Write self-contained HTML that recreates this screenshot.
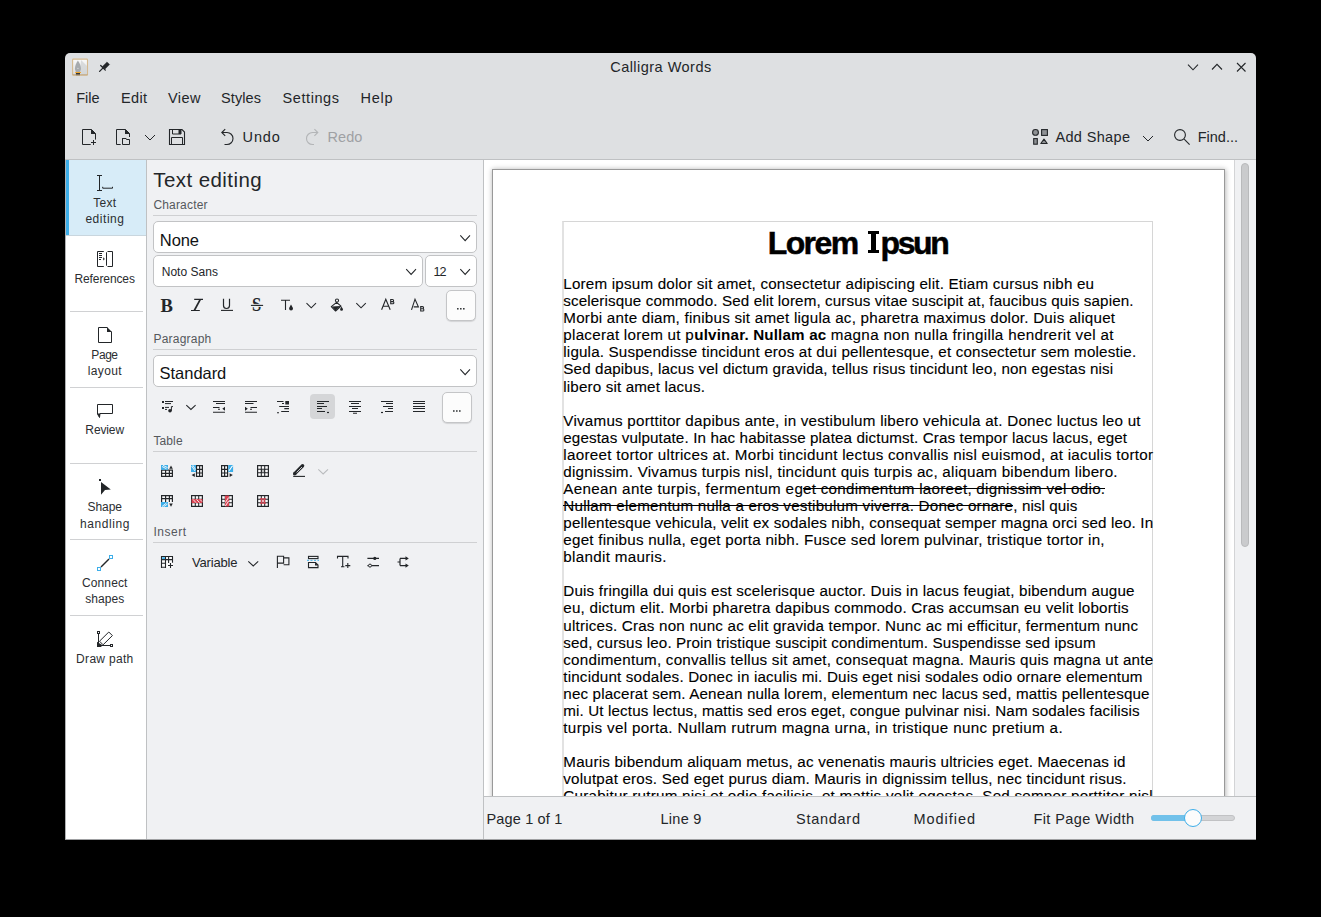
<!DOCTYPE html>
<html><head><meta charset="utf-8"><style>
html,body{margin:0;padding:0;}
body{width:1321px;height:917px;background:#000;position:relative;overflow:hidden;font-family:"Liberation Sans",sans-serif;color:#232629;}
.t{position:absolute;white-space:pre;}
svg{overflow:visible}
</style></head><body>
<div style="position:absolute;left:65px;top:53px;width:1191px;height:107px;background:#dee0e2;border-radius:5px 5px 0 0;"></div>
<div style="position:absolute;left:65px;top:159px;width:1191px;height:1px;background:#bfc1c3;"></div>
<div style="position:absolute;left:65px;top:160px;width:81px;height:680px;background:#ffffff;"></div>
<div style="position:absolute;left:146px;top:160px;width:1px;height:680px;background:#bfc1c3;"></div>
<div style="position:absolute;left:66px;top:160px;width:80px;height:75px;background:#d7ecf8;"></div>
<div style="position:absolute;left:66px;top:160px;width:3px;height:75px;background:#3daee9;"></div>
<div style="position:absolute;left:66px;top:235px;width:80px;height:1px;background:#c9d6de;"></div>
<div style="position:absolute;left:70px;top:311px;width:73px;height:1px;background:#d0d1d3;"></div>
<div style="position:absolute;left:70px;top:387px;width:73px;height:1px;background:#d0d1d3;"></div>
<div style="position:absolute;left:70px;top:463px;width:73px;height:1px;background:#d0d1d3;"></div>
<div style="position:absolute;left:70px;top:539px;width:73px;height:1px;background:#d0d1d3;"></div>
<div style="position:absolute;left:70px;top:615px;width:73px;height:1px;background:#d0d1d3;"></div>
<div style="position:absolute;left:147px;top:160px;width:336px;height:680px;background:#f0f1f3;"></div>
<div style="position:absolute;left:483px;top:160px;width:1px;height:680px;background:#bfc1c3;"></div>
<div style="position:absolute;left:484px;top:160px;width:750px;height:636px;background:#ffffff;"></div>
<div style="position:absolute;left:1234px;top:160px;width:1px;height:636px;background:#d3d4d6;"></div>
<div style="position:absolute;left:1235px;top:160px;width:21px;height:636px;background:#f0f1f3;"></div>
<div style="position:absolute;left:1241px;top:163px;width:8px;height:384px;background:#cacbcd;border:1px solid #b9babc;box-sizing:border-box;border-radius:4px;"></div>
<div style="position:absolute;left:484px;top:796px;width:772px;height:44px;background:#f0f1f3;"></div>
<div style="position:absolute;left:484px;top:796px;width:772px;height:1px;background:#bfc1c3;"></div>
<div style="position:absolute;left:65px;top:160px;width:1px;height:680px;background:#b0b1b3;"></div>
<div style="position:absolute;left:65px;top:839px;width:1191px;height:1px;background:#9fa0a2;"></div>
<div style="position:absolute;left:484px;top:160px;width:750px;height:636px;overflow:hidden;">
<div style="position:absolute;left:9px;top:10px;width:732px;height:700px;background:#fff;box-shadow:0 0 5px 1px rgba(0,0,0,0.28);"></div>
<div style="position:absolute;left:8px;top:9px;width:733px;height:700px;border-left:1px solid #999;border-top:1px solid #999;border-right:1px solid #999;box-sizing:border-box;"></div>
<div style="position:absolute;left:78px;top:61px;width:591px;height:600px;border:1px solid #d6d6d6;border-left:2px solid #e2e2e2;box-sizing:border-box;"></div>
<div class="t" style="left:283.70px;top:66.51px;font-size:32px;line-height:32px;letter-spacing:-1.599px;font-weight:700;color:#000000;-webkit-text-stroke:0.5px #000;">Lorem</div>
<div style="position:absolute;left:387.20000000000005px;top:71.19999999999999px;width:4.6px;height:22.2px;background:#000;"></div>
<div style="position:absolute;left:384.29999999999995px;top:71.19999999999999px;width:10.5px;height:3.0px;background:#000;"></div>
<div style="position:absolute;left:384.29999999999995px;top:90.4px;width:10.5px;height:3.0px;background:#000;"></div>
<div class="t" style="left:396.60px;top:66.51px;font-size:32px;line-height:32px;letter-spacing:-2.412px;font-weight:700;color:#000000;-webkit-text-stroke:0.5px #000;">psun</div>
<div class="t" style="left:79.30px;top:116.13px;font-size:15.2px;line-height:15.2px;letter-spacing:0.197px;color:#000000;-webkit-text-stroke:0.12px #000;">Lorem ipsum dolor sit amet, consectetur adipiscing elit. Etiam cursus nibh eu</div>
<div class="t" style="left:79.30px;top:133.20px;font-size:15.2px;line-height:15.2px;letter-spacing:0.117px;color:#000000;-webkit-text-stroke:0.12px #000;">scelerisque commodo. Sed elit lorem, cursus vitae suscipit at, faucibus quis sapien.</div>
<div class="t" style="left:79.30px;top:150.27px;font-size:15.2px;line-height:15.2px;letter-spacing:0.228px;color:#000000;-webkit-text-stroke:0.12px #000;">Morbi ante diam, finibus sit amet ligula ac, pharetra maximus dolor. Duis aliquet</div>
<div class="t" style="left:79.30px;top:167.34px;font-size:15.2px;line-height:15.2px;letter-spacing:0.257px;color:#000000;-webkit-text-stroke:0.12px #000;">placerat lorem ut p</div>
<div class="t" style="left:210.30px;top:167.34px;font-size:15.2px;line-height:15.2px;letter-spacing:0.162px;font-weight:700;color:#000000;">ulvinar. Nullam ac</div>
<div class="t" style="left:342.30px;top:167.34px;font-size:15.2px;line-height:15.2px;letter-spacing:0.325px;color:#000000;-webkit-text-stroke:0.12px #000;"> magna non nulla fringilla hendrerit vel at</div>
<div class="t" style="left:79.30px;top:184.41px;font-size:15.2px;line-height:15.2px;letter-spacing:0.169px;color:#000000;-webkit-text-stroke:0.12px #000;">ligula. Suspendisse tincidunt eros at dui pellentesque, et consectetur sem molestie.</div>
<div class="t" style="left:79.30px;top:201.48px;font-size:15.2px;line-height:15.2px;letter-spacing:0.138px;color:#000000;-webkit-text-stroke:0.12px #000;">Sed dapibus, lacus vel dictum gravida, tellus risus tincidunt leo, non egestas nisi</div>
<div class="t" style="left:79.30px;top:218.55px;font-size:15.2px;line-height:15.2px;letter-spacing:0.150px;color:#000000;-webkit-text-stroke:0.12px #000;">libero sit amet lacus.</div>
<div class="t" style="left:79.30px;top:252.69px;font-size:15.2px;line-height:15.2px;letter-spacing:0.232px;color:#000000;-webkit-text-stroke:0.12px #000;">Vivamus porttitor dapibus ante, in vestibulum libero vehicula at. Donec luctus leo ut</div>
<div class="t" style="left:79.30px;top:269.76px;font-size:15.2px;line-height:15.2px;letter-spacing:0.123px;color:#000000;-webkit-text-stroke:0.12px #000;">egestas vulputate. In hac habitasse platea dictumst. Cras tempor lacus lacus, eget</div>
<div class="t" style="left:79.30px;top:286.83px;font-size:15.2px;line-height:15.2px;letter-spacing:0.276px;color:#000000;-webkit-text-stroke:0.12px #000;">laoreet tortor ultrices at. Morbi tincidunt lectus convallis nisl euismod, at iaculis tortor</div>
<div class="t" style="left:79.30px;top:303.90px;font-size:15.2px;line-height:15.2px;letter-spacing:0.239px;color:#000000;-webkit-text-stroke:0.12px #000;">dignissim. Vivamus turpis nisl, tincidunt quis turpis ac, aliquam bibendum libero.</div>
<div class="t" style="left:79.30px;top:320.97px;font-size:15.2px;line-height:15.2px;letter-spacing:0.319px;color:#000000;-webkit-text-stroke:0.12px #000;">Aenean ante turpis, fermentum eg</div>
<div style="position:absolute;left:319px;top:328px;width:302.29999999999995px;height:1px;background:#000;"></div>
<div class="t" style="left:319.00px;top:320.97px;font-size:15.2px;line-height:15.2px;letter-spacing:0.258px;color:#000000;-webkit-text-stroke:0.12px #000;">et condimentum laoreet, dignissim vel odio.</div>
<div style="position:absolute;left:79.29999999999995px;top:345px;width:450.0px;height:1px;background:#000;"></div>
<div class="t" style="left:79.30px;top:338.04px;font-size:15.2px;line-height:15.2px;letter-spacing:0.217px;color:#000000;-webkit-text-stroke:0.12px #000;">Nullam elementum nulla a eros vestibulum viverra. Donec ornare</div>
<div class="t" style="left:529.30px;top:338.04px;font-size:15.2px;line-height:15.2px;letter-spacing:0.074px;color:#000000;-webkit-text-stroke:0.12px #000;">, nisl quis</div>
<div class="t" style="left:79.30px;top:355.11px;font-size:15.2px;line-height:15.2px;letter-spacing:0.137px;color:#000000;-webkit-text-stroke:0.12px #000;">pellentesque vehicula, velit ex sodales nibh, consequat semper magna orci sed leo. In</div>
<div class="t" style="left:79.30px;top:372.18px;font-size:15.2px;line-height:15.2px;letter-spacing:0.228px;color:#000000;-webkit-text-stroke:0.12px #000;">eget finibus nulla, eget porta nibh. Fusce sed lorem pulvinar, tristique tortor in,</div>
<div class="t" style="left:79.30px;top:389.25px;font-size:15.2px;line-height:15.2px;letter-spacing:0.311px;color:#000000;-webkit-text-stroke:0.12px #000;">blandit mauris.</div>
<div class="t" style="left:79.30px;top:423.39px;font-size:15.2px;line-height:15.2px;letter-spacing:0.177px;color:#000000;-webkit-text-stroke:0.12px #000;">Duis fringilla dui quis est scelerisque auctor. Duis in lacus feugiat, bibendum augue</div>
<div class="t" style="left:79.30px;top:440.46px;font-size:15.2px;line-height:15.2px;letter-spacing:0.210px;color:#000000;-webkit-text-stroke:0.12px #000;">eu, dictum elit. Morbi pharetra dapibus commodo. Cras accumsan eu velit lobortis</div>
<div class="t" style="left:79.30px;top:457.53px;font-size:15.2px;line-height:15.2px;letter-spacing:0.195px;color:#000000;-webkit-text-stroke:0.12px #000;">ultrices. Cras non nunc ac elit gravida tempor. Nunc ac mi efficitur, fermentum nunc</div>
<div class="t" style="left:79.30px;top:474.60px;font-size:15.2px;line-height:15.2px;letter-spacing:0.130px;color:#000000;-webkit-text-stroke:0.12px #000;">sed, cursus leo. Proin tristique suscipit condimentum. Suspendisse sed ipsum</div>
<div class="t" style="left:79.30px;top:491.67px;font-size:15.2px;line-height:15.2px;letter-spacing:0.226px;color:#000000;-webkit-text-stroke:0.12px #000;">condimentum, convallis tellus sit amet, consequat magna. Mauris quis magna ut ante</div>
<div class="t" style="left:79.30px;top:508.74px;font-size:15.2px;line-height:15.2px;letter-spacing:0.174px;color:#000000;-webkit-text-stroke:0.12px #000;">tincidunt sodales. Donec in iaculis mi. Duis eget nisi sodales odio ornare elementum</div>
<div class="t" style="left:79.30px;top:525.81px;font-size:15.2px;line-height:15.2px;letter-spacing:0.150px;color:#000000;-webkit-text-stroke:0.12px #000;">nec placerat sem. Aenean nulla lorem, elementum nec lacus sed, mattis pellentesque</div>
<div class="t" style="left:79.30px;top:542.88px;font-size:15.2px;line-height:15.2px;letter-spacing:0.124px;color:#000000;-webkit-text-stroke:0.12px #000;">mi. Ut lectus lectus, mattis sed eros eget, congue pulvinar nisi. Nam sodales facilisis</div>
<div class="t" style="left:79.30px;top:559.95px;font-size:15.2px;line-height:15.2px;letter-spacing:0.339px;color:#000000;-webkit-text-stroke:0.12px #000;">turpis vel porta. Nullam rutrum magna urna, in tristique nunc pretium a.</div>
<div class="t" style="left:79.30px;top:594.09px;font-size:15.2px;line-height:15.2px;letter-spacing:0.198px;color:#000000;-webkit-text-stroke:0.12px #000;">Mauris bibendum aliquam metus, ac venenatis mauris ultricies eget. Maecenas id</div>
<div class="t" style="left:79.30px;top:611.16px;font-size:15.2px;line-height:15.2px;letter-spacing:0.196px;color:#000000;-webkit-text-stroke:0.12px #000;">volutpat eros. Sed eget purus diam. Mauris in dignissim tellus, nec tincidunt risus.</div>
<div class="t" style="left:79.30px;top:628.23px;font-size:15.2px;line-height:15.2px;letter-spacing:0.235px;color:#000000;-webkit-text-stroke:0.12px #000;">Curabitur rutrum nisi et odio facilisis, et mattis velit egestas. Sed semper porttitor nisl</div>
</div>
<div class="t" style="left:610.20px;top:59.53px;font-size:14.5px;line-height:14.5px;letter-spacing:0.476px;">Calligra Words</div>
<div class="t" style="left:76.25px;top:90.73px;font-size:14.5px;line-height:14.5px;letter-spacing:-0.038px;">File</div>
<div class="t" style="left:121.00px;top:90.73px;font-size:14.5px;line-height:14.5px;letter-spacing:0.338px;">Edit</div>
<div class="t" style="left:168.00px;top:90.73px;font-size:14.5px;line-height:14.5px;letter-spacing:0.444px;">View</div>
<div class="t" style="left:221.00px;top:90.73px;font-size:14.5px;line-height:14.5px;letter-spacing:0.103px;">Styles</div>
<div class="t" style="left:282.50px;top:90.73px;font-size:14.5px;line-height:14.5px;letter-spacing:0.587px;">Settings</div>
<div class="t" style="left:360.50px;top:90.73px;font-size:14.5px;line-height:14.5px;letter-spacing:0.726px;">Help</div>
<div class="t" style="left:242.60px;top:130.23px;font-size:14.5px;line-height:14.5px;letter-spacing:0.812px;">Undo</div>
<div class="t" style="left:327.40px;top:130.23px;font-size:14.5px;line-height:14.5px;letter-spacing:0.112px;color:#9fa1a4;">Redo</div>
<div class="t" style="left:1055.40px;top:130.23px;font-size:14.5px;line-height:14.5px;letter-spacing:0.355px;">Add Shape</div>
<div class="t" style="left:1197.70px;top:130.23px;font-size:14.5px;line-height:14.5px;letter-spacing:0.001px;">Find...</div>
<div class="t" style="left:93.30px;top:196.64px;font-size:12px;line-height:12px;letter-spacing:0.264px;color:#2b2e31;">Text</div>
<div class="t" style="left:85.40px;top:213.34px;font-size:12px;line-height:12px;letter-spacing:0.540px;color:#2b2e31;">editing</div>
<div class="t" style="left:74.45px;top:272.64px;font-size:12px;line-height:12px;letter-spacing:-0.096px;color:#2b2e31;">References</div>
<div class="t" style="left:91.35px;top:348.54px;font-size:12px;line-height:12px;letter-spacing:-0.442px;color:#2b2e31;">Page</div>
<div class="t" style="left:87.80px;top:365.24px;font-size:12px;line-height:12px;letter-spacing:0.356px;color:#2b2e31;">layout</div>
<div class="t" style="left:85.35px;top:424.14px;font-size:12px;line-height:12px;letter-spacing:-0.129px;color:#2b2e31;">Review</div>
<div class="t" style="left:87.50px;top:501.04px;font-size:12px;line-height:12px;letter-spacing:-0.075px;color:#2b2e31;">Shape</div>
<div class="t" style="left:80.05px;top:517.84px;font-size:12px;line-height:12px;letter-spacing:0.561px;color:#2b2e31;">handling</div>
<div class="t" style="left:82.05px;top:576.64px;font-size:12px;line-height:12px;letter-spacing:0.101px;color:#2b2e31;">Connect</div>
<div class="t" style="left:85.20px;top:592.64px;font-size:12px;line-height:12px;letter-spacing:0.061px;color:#2b2e31;">shapes</div>
<div class="t" style="left:76.10px;top:652.84px;font-size:12px;line-height:12px;letter-spacing:0.314px;color:#2b2e31;">Draw path</div>
<div class="t" style="left:153.30px;top:169.55px;font-size:20.5px;line-height:20.5px;letter-spacing:0.418px;">Text editing</div>
<div class="t" style="left:153.40px;top:199.24px;font-size:12px;line-height:12px;letter-spacing:0.177px;color:#55585c;">Character</div>
<div class="t" style="left:153.40px;top:333.44px;font-size:12px;line-height:12px;letter-spacing:0.233px;color:#55585c;">Paragraph</div>
<div class="t" style="left:153.40px;top:434.84px;font-size:12px;line-height:12px;letter-spacing:0.128px;color:#55585c;">Table</div>
<div class="t" style="left:153.40px;top:525.84px;font-size:12px;line-height:12px;letter-spacing:0.558px;color:#55585c;">Insert</div>
<div style="position:absolute;left:153px;top:215px;width:324px;height:1px;background:#cfd0d2;"></div>
<div style="position:absolute;left:153px;top:349px;width:324px;height:1px;background:#cfd0d2;"></div>
<div style="position:absolute;left:153px;top:451px;width:324px;height:1px;background:#cfd0d2;"></div>
<div style="position:absolute;left:153px;top:542px;width:324px;height:1px;background:#cfd0d2;"></div>
<div style="position:absolute;left:153px;top:221px;width:324px;height:32px;background:#fff;border:1px solid #c2c3c5;box-sizing:border-box;border-radius:5px;"></div>
<div style="position:absolute;left:153px;top:255px;width:270px;height:32px;background:#fff;border:1px solid #c2c3c5;box-sizing:border-box;border-radius:5px;"></div>
<div style="position:absolute;left:425px;top:255px;width:52px;height:32px;background:#fff;border:1px solid #c2c3c5;box-sizing:border-box;border-radius:5px;"></div>
<div style="position:absolute;left:153px;top:355px;width:324px;height:32px;background:#fff;border:1px solid #c2c3c5;box-sizing:border-box;border-radius:5px;"></div>
<div class="t" style="left:159.80px;top:231.53px;font-size:16.5px;line-height:16.5px;letter-spacing:-0.082px;color:#101214;">None</div>
<div class="t" style="left:161.70px;top:265.64px;font-size:12px;line-height:12px;letter-spacing:0.033px;">Noto Sans</div>
<div class="t" style="left:433.60px;top:265.63px;font-size:12.6px;line-height:12.6px;letter-spacing:-1.215px;">12</div>
<div class="t" style="left:159.60px;top:365.43px;font-size:16.5px;line-height:16.5px;letter-spacing:-0.038px;color:#101214;">Standard</div>
<div class="t" style="left:192.00px;top:556.00px;font-size:13px;line-height:13px;letter-spacing:-0.176px;">Variable</div>
<div style="position:absolute;left:446px;top:290px;width:30px;height:31px;background:#fcfcfc;border:1px solid #c4c5c7;box-sizing:border-box;border-radius:5px;box-shadow:0 1px 1px rgba(0,0,0,0.12);"></div>
<div style="position:absolute;left:442px;top:392px;width:30px;height:31px;background:#fcfcfc;border:1px solid #c4c5c7;box-sizing:border-box;border-radius:5px;box-shadow:0 1px 1px rgba(0,0,0,0.12);"></div>
<div style="position:absolute;left:310px;top:394px;width:25px;height:25px;background:#d5d6d8;border-radius:4px;"></div>
<div class="t" style="left:486.50px;top:812.23px;font-size:14.5px;line-height:14.5px;letter-spacing:0.153px;">Page 1 of 1</div>
<div class="t" style="left:660.50px;top:812.23px;font-size:14.5px;line-height:14.5px;letter-spacing:0.259px;">Line 9</div>
<div class="t" style="left:796.00px;top:812.23px;font-size:14.5px;line-height:14.5px;letter-spacing:0.736px;">Standard</div>
<div class="t" style="left:913.50px;top:812.23px;font-size:14.5px;line-height:14.5px;letter-spacing:0.956px;">Modified</div>
<div class="t" style="left:1033.40px;top:812.23px;font-size:14.5px;line-height:14.5px;letter-spacing:0.424px;">Fit Page Width</div>
<div style="position:absolute;left:1151px;top:815px;width:84px;height:6px;background:#d3d4d6;border:1px solid #c1c2c4;box-sizing:border-box;border-radius:3px;"></div>
<div style="position:absolute;left:1151px;top:815px;width:40px;height:6px;background:#71c1ea;border-radius:3px;"></div>
<div style="position:absolute;left:1184px;top:809px;width:18px;height:18px;background:#fcfcfc;border:1px solid #3daee9;box-sizing:border-box;border-radius:50%;"></div>
<svg style="position:absolute;left:0px;top:0px;" width="1" height="1" viewBox="0 0 1 1"><defs><linearGradient id="ag" x1="0" y1="0" x2="0" y2="1"><stop offset="0" stop-color="#fbfbfb"/><stop offset="1" stop-color="#d9dbdd"/></linearGradient></defs><rect x="72.6" y="59.1" width="14.9" height="16.1" rx="0.8" fill="url(#ag)" stroke="#d5b98f" stroke-width="1.1"/><path d="M81 60 L87 66 L87 74.6 L80 74.6 Z" fill="#d2d4d6" opacity="0.8"/><path d="M77.9 60.4 C76.2 62.8 74.9 66 74.9 69 L75.8 72 H80.1 L81 69 C81 66 79.7 62.8 77.9 60.4Z" fill="#a7abae"/><circle cx="77.95" cy="68.3" r="0.6" fill="#e8e8e8"/><rect x="75.2" y="72" width="5.8" height="1" fill="#f5a623"/><rect x="75.9" y="73" width="4.1" height="2.2" fill="#31363b"/><rect x="72.6" y="74.2" width="14.9" height="1" fill="#bb9c6e" opacity="0.7"/></svg>
<svg style="position:absolute;left:0px;top:0px;" width="1" height="1" viewBox="0 0 1 1"><path d="M99.6 71.4 L102.6 68.4" stroke="#232629" stroke-width="1.3" stroke-linecap="round"/><path d="M100.7 65.5 L105.3 70.1" stroke="#232629" stroke-width="1.3" stroke-linecap="round"/><path d="M102.2 66.7 L107 61.9 L109.6 64.5 L104.8 69.3 Z" fill="#232629" stroke="#232629" stroke-width="0.4" stroke-linejoin="round"/></svg>
<svg style="position:absolute;left:1180px;top:57px;" width="20" height="20" viewBox="0 0 20 20"><path d="M8 7.7 L13 12.8 L18 7.7" transform="translate(0,0)" fill="none" stroke="#232629" stroke-width="1.1"/></svg>
<svg style="position:absolute;left:1205px;top:57px;" width="20" height="20" viewBox="0 0 20 20"><path d="M7 12.5 L12 7.3 L17 12.5" fill="none" stroke="#232629" stroke-width="1.1"/></svg>
<svg style="position:absolute;left:1230px;top:57px;" width="20" height="20" viewBox="0 0 20 20"><path d="M7 6 L15.5 14.5 M15.5 6 L7 14.5" fill="none" stroke="#232629" stroke-width="1.1"/></svg>
<svg style="position:absolute;left:78px;top:126px;" width="22" height="22" viewBox="0 0 22 22"><path d="M12.7 18.5 H4.5 V3.5 H13.5 L17.5 7.5 V13.6" fill="none" stroke="#232629"/><path d="M13 3 V8 H18 Z" fill="#232629"/><path d="M13 16.5 H18 M15.5 14 V19" stroke="#232629"/></svg>
<svg style="position:absolute;left:112px;top:126px;" width="22" height="22" viewBox="0 0 22 22"><path d="M8.7 18.5 H4.5 V3.5 H13.5 L17.5 7.5 V11" fill="none" stroke="#232629"/><path d="M13 3 V8 H18 Z" fill="#232629"/><path d="M10.5 18.5 V12.5 H13.5 L14.5 13.5 H17.5 V18.5 Z" fill="none" stroke="#232629"/><path d="M10 12 H14 L14.8 13 H11 V15 H10Z" fill="#232629"/></svg>
<svg style="position:absolute;left:144px;top:134px;" width="12" height="7" viewBox="0 0 12 7"><path d="M1 1 L6.0 6 L11 1" fill="none" stroke="#232629" stroke-width="1.0"/></svg>
<svg style="position:absolute;left:166px;top:126px;" width="22" height="22" viewBox="0 0 22 22"><path d="M3.5 3.5 H16 L18.5 6 V18.5 H3.5 Z" fill="none" stroke="#232629" stroke-width="1.1"/><path d="M6.5 3.5 V8 H15 V3.5" fill="none" stroke="#232629"/><rect x="12.5" y="3.5" width="2.5" height="4.5" fill="#232629"/><path d="M5.5 18.5 V11.5 H16.5 V18.5" fill="none" stroke="#232629"/></svg>
<svg style="position:absolute;left:0px;top:0px;" width="1" height="1" viewBox="0 0 1 1"><path d="M225.2 129.2 L221.8 132.5 L225.2 135.8" fill="none" stroke="#232629" stroke-width="1.1"/><path d="M222 132.5 H227 A6 6 0 0 1 227 144.5 H224.5" fill="none" stroke="#232629" stroke-width="1.1"/></svg>
<svg style="position:absolute;left:0px;top:0px;" width="1" height="1" viewBox="0 0 1 1"><path d="M314.4 129.2 L317.8 132.5 L314.4 135.8" fill="none" stroke="#b3b5b7" stroke-width="1.1"/><path d="M317.6 132.5 H312.5 A6 6 0 0 0 312.5 144.5 H314" fill="none" stroke="#b3b5b7" stroke-width="1.1"/></svg>
<svg style="position:absolute;left:0px;top:0px;" width="1" height="1" viewBox="0 0 1 1"><circle cx="1035.5" cy="132.4" r="2.9" fill="#8e9194" stroke="#232629" stroke-width="1.1"/><rect x="1041.6" y="129.6" width="5.8" height="5.8" fill="#8e9194" stroke="#232629" stroke-width="1.1"/><rect x="1033.7" y="138.6" width="3.6" height="5.6" fill="#8e9194" stroke="#232629" stroke-width="1.1"/><path d="M1044 139.2 L1047.2 143.5 H1040.8 Z" fill="#8e9194" stroke="#232629" stroke-width="1.1" stroke-linejoin="round"/></svg>
<svg style="position:absolute;left:1141.5px;top:134.5px;" width="12" height="7" viewBox="0 0 12 7"><path d="M1 1 L6.0 6 L11 1" fill="none" stroke="#232629" stroke-width="1.0"/></svg>
<svg style="position:absolute;left:0px;top:0px;" width="1" height="1" viewBox="0 0 1 1"><circle cx="1180" cy="135" r="5.4" fill="none" stroke="#232629" stroke-width="1.1"/><path d="M1184.2 139.2 L1189.6 144.6" stroke="#232629" stroke-width="1.1"/></svg>
<svg style="position:absolute;left:94px;top:172px;" width="22" height="22" viewBox="0 0 22 22"><path d="M3 3.5 H8 M5.5 3.5 V18.5 M3 18.5 H8" fill="none" stroke="#232629" stroke-width="1"/><path d="M8.7 14.8 V16.2 H18.5 V14.8" fill="none" stroke="#232629" stroke-width="1"/></svg>
<svg style="position:absolute;left:94px;top:248px;" width="22" height="22" viewBox="0 0 22 22"><path d="M9.8 3.5 H3.5 V18.5 H9.8" fill="none" stroke="#232629"/><path d="M5 5.5 H8 M5 7.5 H8 M5 9.5 H8 M5 11.5 H7" stroke="#232629"/><path d="M9.2 9.2 L10.9 10.9 L9.2 12.6 Z" fill="#232629"/><path d="M13.5 3.5 H18.5 V18.5 H13.5 M12.5 4.3 V17.7" fill="none" stroke="#232629"/></svg>
<svg style="position:absolute;left:94px;top:324px;" width="22" height="22" viewBox="0 0 22 22"><path d="M13.4 3.5 H4.5 V18.5 H17.5 V7.6" fill="none" stroke="#232629"/><path d="M13 3 V8 H18 Z" fill="#232629"/></svg>
<svg style="position:absolute;left:94px;top:400px;" width="22" height="22" viewBox="0 0 22 22"><path d="M3.5 4.5 H18.5 V13.5 H6 L5.5 17.5 L3.5 14 Z" fill="none" stroke="#232629" stroke-linejoin="miter"/><path d="M3.2 13.5 L5.6 17.6 L6.1 13.6 Z" fill="#232629"/></svg>
<svg style="position:absolute;left:94px;top:476px;" width="22" height="22" viewBox="0 0 22 22"><rect x="5" y="3" width="2" height="2" fill="#232629"/><path d="M7 6 L16.8 13.5 L11 14 L7 18.7 Z" fill="#232629"/></svg>
<svg style="position:absolute;left:94px;top:552px;" width="22" height="22" viewBox="0 0 22 22"><path d="M7 15 L15 7" stroke="#232629" stroke-width="1.4"/><rect x="3.5" y="15.5" width="3" height="3" fill="none" stroke="#3daee9"/><rect x="15.5" y="3.5" width="3" height="3" fill="none" stroke="#3daee9"/></svg>
<svg style="position:absolute;left:94px;top:628px;" width="22" height="22" viewBox="0 0 22 22"><rect x="3.5" y="3.5" width="2" height="2" fill="none" stroke="#232629"/><rect x="16.5" y="16.5" width="2" height="2" fill="none" stroke="#232629"/><path d="M4.5 6 V15 M8 17.5 H16" stroke="#232629"/><path d="M3 13.8 L8.5 17.3 L7 19 H3 Z" fill="#232629"/><path d="M5.5 13.2 L14.8 4 L18.4 7.6 L9.1 16.8 Z" fill="none" stroke="#232629"/></svg>
<div class="t" style="left:160.60px;top:296.66px;font-size:18.6px;line-height:18.6px;font-weight:700;font-family:'Liberation Serif',serif;">B</div>
<svg style="position:absolute;left:0px;top:0px;" width="1" height="1" viewBox="0 0 1 1"><path d="M194.2 299.4 H203 M191 310.5 H199.8" stroke="#232629" stroke-width="1.1"/><path d="M200.3 299.4 L194.3 310.5" stroke="#232629" stroke-width="1.7"/></svg>
<svg style="position:absolute;left:0px;top:0px;" width="1" height="1" viewBox="0 0 1 1"><path d="M223.5 298.8 V305.5 A3 3 0 0 0 229.5 305.5 V298.8" fill="none" stroke="#232629" stroke-width="1.2"/><path d="M221 310.4 H233" stroke="#232629" stroke-width="1.1"/></svg>
<div class="t" style="left:252.30px;top:295.64px;font-size:18.5px;line-height:18.5px;font-weight:700;font-family:'Liberation Serif',serif;transform:scaleX(0.9);transform-origin:0 0;">S</div>
<svg style="position:absolute;left:0px;top:0px;" width="1" height="1" viewBox="0 0 1 1"><path d="M251 304.4 H263 M251 306.4 H263" stroke="#f0f1f3" stroke-width="1"/><path d="M250.9 305.4 H263.1" stroke="#232629" stroke-width="1.1"/></svg>
<svg style="position:absolute;left:0px;top:0px;" width="1" height="1" viewBox="0 0 1 1"><path d="M281 300.3 H290 M285.5 300.3 V310" stroke="#232629" stroke-width="1.1"/><path d="M291 304.5 C290 306.5 289.1 307.6 289.1 308.6 A1.95 1.95 0 0 0 293 308.6 C293 307.6 292 306.5 291 304.5Z" fill="#232629"/></svg>
<svg style="position:absolute;left:0px;top:0px;" width="1" height="1" viewBox="0 0 1 1"><path d="M306.5 303.2 L311.25 307.8 L316 303.2" fill="none" stroke="#232629" stroke-width="1.05"/></svg>
<svg style="position:absolute;left:0px;top:0px;" width="1" height="1" viewBox="0 0 1 1"><path d="M331.3 306.6 L336.6 302.4 L341 306.2 L335.6 311 Z" fill="none" stroke="#232629" stroke-width="1.1" stroke-linejoin="round"/><path d="M332 306.6 L340.6 305.9 L335.6 310.4 Z" fill="#232629"/><circle cx="337" cy="300.6" r="1.6" fill="none" stroke="#232629" stroke-width="1.05"/><path d="M341.5 306.4 C340.9 307.7 340.1 308.5 340.1 309.4 A1.45 1.45 0 0 0 343 309.4 C343 308.5 342.2 307.7 341.5 306.4Z" fill="#232629"/></svg>
<svg style="position:absolute;left:0px;top:0px;" width="1" height="1" viewBox="0 0 1 1"><path d="M356.3 303.2 L361.05 307.8 L365.8 303.2" fill="none" stroke="#232629" stroke-width="1.05"/></svg>
<svg style="position:absolute;left:0px;top:0px;" width="1" height="1" viewBox="0 0 1 1"><path d="M381.6 309.8 L385.8 299.2 L390.2 309.8 M383.2 306.2 H388.6" fill="none" stroke="#232629" stroke-width="1.1"/></svg>
<svg style="position:absolute;left:0px;top:0px;" width="1" height="1" viewBox="0 0 1 1"><path d="M390.7 299.4 V303.79999999999995 H392.8 A1.1 1.1 0 0 0 392.8 301.59999999999997 H390.7 M390.7 301.59999999999997 H392.5 A1.1 1.1 0 0 0 392.5 299.4 H390.7Z" fill="none" stroke="#232629" stroke-width="1.05"/></svg>
<svg style="position:absolute;left:0px;top:0px;" width="1" height="1" viewBox="0 0 1 1"><path d="M411.5 309.8 L415 299.2 L418.4 306.9 H413.7" fill="none" stroke="#232629" stroke-width="1.1"/></svg>
<svg style="position:absolute;left:0px;top:0px;" width="1" height="1" viewBox="0 0 1 1"><path d="M420.7 306.6 V311.0 H422.8 A1.1 1.1 0 0 0 422.8 308.8 H420.7 M420.7 308.8 H422.5 A1.1 1.1 0 0 0 422.5 306.6 H420.7Z" fill="none" stroke="#232629" stroke-width="1.05"/></svg>
<svg style="position:absolute;left:0px;top:0px;" width="1" height="1" viewBox="0 0 1 1"><rect x="457.0" y="308.1" width="1.6" height="1.4" fill="#232629"/><rect x="460.0" y="308.1" width="1.6" height="1.4" fill="#232629"/><rect x="463.0" y="308.1" width="1.6" height="1.4" fill="#232629"/></svg>
<svg style="position:absolute;left:0px;top:0px;" width="1" height="1" viewBox="0 0 1 1"><rect x="453.0" y="410.3" width="1.6" height="1.4" fill="#232629"/><rect x="456.0" y="410.3" width="1.6" height="1.4" fill="#232629"/><rect x="459.0" y="410.3" width="1.6" height="1.4" fill="#232629"/></svg>
<svg style="position:absolute;left:0px;top:0px;" width="1" height="1" viewBox="0 0 1 1"><rect x="162" y="401" width="2" height="2" fill="#232629"/><rect x="162" y="407" width="2" height="2" fill="#232629"/><path d="M165 401.5 H173 M165 403.6 H171 M165 407.4 H169 M165 409.4 H167" stroke="#232629" stroke-width="1"/><circle cx="170" cy="410.8" r="1.8" fill="#232629"/><path d="M171.4 410.8 V406.6 H173" fill="none" stroke="#232629" stroke-width="1"/></svg>
<svg style="position:absolute;left:0px;top:0px;" width="1" height="1" viewBox="0 0 1 1"><path d="M186.3 405.2 L190.95 409.5 L195.6 405.2" fill="none" stroke="#232629" stroke-width="1.05"/></svg>
<svg style="position:absolute;left:0px;top:0px;" width="1" height="1" viewBox="0 0 1 1"><path d="M213 401.4 H225 M216 403.4 H225 M213 407.4 H219.5 M218 409.3 H220 M213 412.3 H225" stroke="#232629" stroke-width="1.05"/><path d="M225 406.8 V410.8 L222.3 408.8Z" fill="#232629"/></svg>
<svg style="position:absolute;left:0px;top:0px;" width="1" height="1" viewBox="0 0 1 1"><path d="M245 401.4 H257 M245 403.4 H253.5 M250.5 407.4 H257 M250 409.3 H252 M245 412.3 H257" stroke="#232629" stroke-width="1.05"/><path d="M245 406.8 V410.8 L247.8 408.8Z" fill="#232629"/></svg>
<svg style="position:absolute;left:0px;top:0px;" width="1" height="1" viewBox="0 0 1 1"><path d="M277 401.4 H283.5 M282 403.4 H284 M279.2 406.5 H289 M284.3 408.6 H289 M281.2 411.5 H289 M277 412.8 H279" stroke="#232629" stroke-width="1.05"/><rect x="285.3" y="401" width="3.7" height="3.5" fill="#232629"/></svg>
<svg style="position:absolute;left:0px;top:0px;" width="1" height="1" viewBox="0 0 1 1"><path d="M317 401.45 H329 M317 403.45 H324 M317 406.45 H327 M317 408.45 H322 M317 411.45 H325 M317 412.4 H317 " stroke="#232629" stroke-width="1.05"/></svg>
<svg style="position:absolute;left:0px;top:0px;" width="1" height="1" viewBox="0 0 1 1"><rect x="327" y="411.9" width="2" height="1.2" fill="#232629"/></svg>
<svg style="position:absolute;left:0px;top:0px;" width="1" height="1" viewBox="0 0 1 1"><path d="M349.0 401.45 H361.0 M351.0 403.45 H359.0 M349.0 406.45 H361.0 M352.0 408.45 H358.0 M349.0 411.45 H361.0 M353.0 413.3 H357.0 " stroke="#232629" stroke-width="1.05"/></svg>
<svg style="position:absolute;left:0px;top:0px;" width="1" height="1" viewBox="0 0 1 1"><path d="M381 401.45 H393 M386 403.45 H393 M383 406.45 H393 M388 408.45 H393 M385 411.45 H393 " stroke="#232629" stroke-width="1.05"/></svg>
<svg style="position:absolute;left:0px;top:0px;" width="1" height="1" viewBox="0 0 1 1"><rect x="381" y="411.9" width="2" height="1.2" fill="#232629"/></svg>
<svg style="position:absolute;left:0px;top:0px;" width="1" height="1" viewBox="0 0 1 1"><path d="M413 401.45 H425 M413 403.45 H425 M413 406.45 H425 M413 408.45 H425 M413 411.45 H425 " stroke="#232629" stroke-width="1.05"/></svg>
<svg style="position:absolute;left:0px;top:0px;" width="1" height="1" viewBox="0 0 1 1"><rect x="161" y="469.5" width="12" height="7.5" fill="#fcfcfc"/><path d="M161.6 469.6 V477 M165.6 469.6 V477 M169.4 469.6 V477 M172.4 469.6 V477 M161 470.2 H173 M161 473.4 H173 M161 476.4 H173" stroke="#232629" stroke-width="1.2"/><rect x="161" y="465" width="7" height="4.8" fill="#3daee9"/><path d="M162 466.5 L166.5 468.8 M163 465.3 L167.5 467.6" stroke="#fcfcfc" stroke-width="0.9"/><path d="M169.2 468.7 L171 465.6 L172.8 468.7Z" fill="#232629"/></svg>
<svg style="position:absolute;left:0px;top:0px;" width="1" height="1" viewBox="0 0 1 1"><rect x="196" y="465" width="7" height="12" fill="#fcfcfc"/><path d="M196.2 465.6 H203 M196.2 469.4 H203 M196.2 473 H203 M196.2 476.4 H203 M196.5 465 V477 M199.6 465 V477 M202.4 465 V477" stroke="#232629" stroke-width="1.2"/><rect x="191" y="465" width="5" height="7" fill="#3daee9"/><path d="M191.7 466 L195 471 M192.8 465.2 L195.6 469.6" stroke="#fcfcfc" stroke-width="0.9"/><path d="M194.8 473.3 V476.9 L191.6 475.1Z" fill="#232629"/></svg>
<svg style="position:absolute;left:0px;top:0px;" width="1" height="1" viewBox="0 0 1 1"><rect x="221" y="465" width="7" height="12" fill="#fcfcfc"/><path d="M221 465.6 H228 M221 469.4 H228 M221 473 H228 M221 476.4 H228 M221.6 465 V477 M224.6 465 V477 M227.6 465 V477" stroke="#232629" stroke-width="1.2"/><rect x="228.3" y="465" width="4.8" height="7" fill="#3daee9"/><path d="M229 471 L232.4 466 M229.6 469.8 L232.8 465.4" stroke="#fcfcfc" stroke-width="0.9"/><path d="M229.6 473.3 V476.9 L232.8 475.1Z" fill="#232629"/></svg>
<svg style="position:absolute;left:0px;top:0px;" width="1" height="1" viewBox="0 0 1 1"><rect x="257" y="465" width="12" height="12" fill="#fcfcfc"/><path d="M261.3 465 V477 M264.7 465 V477 M257 469.3 H269 M257 472.7 H269" stroke="#232629" stroke-width="1.05"/><rect x="257.6" y="465.6" width="10.8" height="10.8" fill="none" stroke="#232629" stroke-width="1.2"/><path d="M261 469.5 L262.2 471 L261 472.5 M265 469.5 L263.8 471 L265 472.5" fill="none" stroke="#232629" stroke-width="1"/></svg>
<svg style="position:absolute;left:0px;top:0px;" width="1" height="1" viewBox="0 0 1 1"><path d="M293.2 476.4 H305" stroke="#232629" stroke-width="1.1"/><path d="M294.8 473.6 L302.6 465.8" stroke="#232629" stroke-width="3.4" stroke-linecap="round"/><path d="M296.6 472.4 L302 467" stroke="#f0f1f3" stroke-width="0.8"/><path d="M293.2 475.2 L293.8 471.8 L296.6 474.6 Z" fill="#232629"/></svg>
<svg style="position:absolute;left:0px;top:0px;" width="1" height="1" viewBox="0 0 1 1"><path d="M318.3 469.4 L323.15 474 L328 469.4" fill="none" stroke="#b9bbbd" stroke-width="1.05"/></svg>
<svg style="position:absolute;left:0px;top:0px;" width="1" height="1" viewBox="0 0 1 1"><rect x="161" y="495" width="12" height="7" fill="#fcfcfc"/><path d="M161 495.6 H173 M161 498.6 H173 M161.6 495 V502 M165.6 495 V502 M169.4 495 V502 M172.4 495 V502" stroke="#232629" stroke-width="1.2"/><rect x="161" y="502" width="7" height="5" fill="#3daee9"/><path d="M162 506.5 L166.5 503 M163.5 506.8 L167.5 504" stroke="#fcfcfc" stroke-width="0.9"/><path d="M169.2 503.6 L172.8 503.6 L171 506.8Z" fill="#232629"/></svg>
<svg style="position:absolute;left:0px;top:0px;" width="1" height="1" viewBox="0 0 1 1"><rect x="191" y="495" width="12" height="12" fill="#fcfcfc"/><path d="M195.3 495 V507 M198.7 495 V507 M191 499.3 H203 M191 502.7 H203" stroke="#232629" stroke-width="1.05"/><rect x="191.6" y="495.6" width="10.8" height="10.8" fill="none" stroke="#232629" stroke-width="1.2"/><rect x="191.6" y="499" width="10.8" height="4" fill="#da4453"/><path d="M193 499.4 L196 502.6 M196.5 499.4 L199.5 502.6 M200 499.4 L202 501.6" stroke="#fcfcfc" stroke-width="0.9"/></svg>
<svg style="position:absolute;left:0px;top:0px;" width="1" height="1" viewBox="0 0 1 1"><rect x="221" y="495" width="12" height="12" fill="#fcfcfc"/><path d="M225.3 495 V507 M228.7 495 V507 M221 499.3 H233 M221 502.7 H233" stroke="#232629" stroke-width="1.05"/><rect x="221.6" y="495.6" width="10.8" height="10.8" fill="none" stroke="#232629" stroke-width="1.2"/><rect x="225" y="495.6" width="4" height="10.8" fill="#da4453"/><path d="M225.4 502.5 L228.6 497.5 M225.4 506 L228.6 501" stroke="#fcfcfc" stroke-width="0.9"/></svg>
<svg style="position:absolute;left:0px;top:0px;" width="1" height="1" viewBox="0 0 1 1"><rect x="257" y="495" width="12" height="12" fill="#fcfcfc"/><path d="M261.3 495 V507 M264.7 495 V507 M257 499.3 H269 M257 502.7 H269" stroke="#232629" stroke-width="1.05"/><rect x="257.6" y="495.6" width="10.8" height="10.8" fill="none" stroke="#232629" stroke-width="1.2"/><path d="M260.8 498.8 H265.2 L264 501 L265.2 503.2 H260.8 L262 501 Z" fill="none" stroke="#da4453" stroke-width="1.2"/></svg>
<svg style="position:absolute;left:0px;top:0px;" width="1" height="1" viewBox="0 0 1 1"><rect x="161" y="556" width="12" height="12" fill="#fcfcfc"/><path d="M161.5 556 V568 M165.5 556.5 V568 M168.6 556.5 V563 M172.5 556.5 V562.8 M161 556.5 H173 M161 559.6 H173 M161 563.3 H166 M161 567.3 H166" stroke="#232629" stroke-width="1.1"/><rect x="162.2" y="557.2" width="2.8" height="1.9" fill="#3daee9"/><path d="M168 565.5 H173 M170.5 563 V568" stroke="#232629" stroke-width="1.1"/></svg>
<svg style="position:absolute;left:0px;top:0px;" width="1" height="1" viewBox="0 0 1 1"><path d="M248.3 561.3 L253.25 566 L258.2 561.3" fill="none" stroke="#232629" stroke-width="1.05"/></svg>
<svg style="position:absolute;left:0px;top:0px;" width="1" height="1" viewBox="0 0 1 1"><path d="M277.4 555.7 V568 M277.4 556.3 H283.6 V563.1 H277.4 M283.6 557.9 H288.9 V564.7 H283.6" fill="none" stroke="#232629" stroke-width="1.1"/></svg>
<svg style="position:absolute;left:0px;top:0px;" width="1" height="1" viewBox="0 0 1 1"><rect x="308.5" y="556.4" width="9.5" height="2.2" fill="none" stroke="#232629" stroke-width="1.1"/><path d="M307 560.3 H319" stroke="#3daee9" stroke-width="1" stroke-dasharray="2 1.5"/><path d="M308.5 562.5 V567.6 H318 V565 L315.5 562.5 Z" fill="none" stroke="#232629" stroke-width="1.1"/><path d="M315 562.5 V565.5 H318Z" fill="#232629"/></svg>
<svg style="position:absolute;left:0px;top:0px;" width="1" height="1" viewBox="0 0 1 1"><path d="M337.5 558.5 V556.4 H348 V558.5 M342.7 556.4 V566.8 M341 566.8 H344.4 M345.3 565.6 H350.3 M347.8 563.1 V568.1" fill="none" stroke="#232629" stroke-width="1.1"/></svg>
<svg style="position:absolute;left:0px;top:0px;" width="1" height="1" viewBox="0 0 1 1"><path d="M367.4 558.4 H379 M367.4 565.6 H368.4 M371.6 565.6 H379" stroke="#232629" stroke-width="1.1"/><circle cx="374.8" cy="558.4" r="1.6" fill="#232629"/><circle cx="370" cy="565.6" r="1.5" fill="none" stroke="#232629" stroke-width="1"/></svg>
<svg style="position:absolute;left:0px;top:0px;" width="1" height="1" viewBox="0 0 1 1"><path d="M397.5 562 H400 M400 558.4 V565.6 M400 558.4 H406 M400 565.6 H406" fill="none" stroke="#232629" stroke-width="1.2"/><path d="M405.5 556.3 L408.8 558.4 L405.5 560.5Z M405.5 563.5 L408.8 565.6 L405.5 567.7Z" fill="#232629"/></svg>
<svg style="position:absolute;left:0px;top:0px;" width="1" height="1" viewBox="0 0 1 1"><path d="M460.3 235.3 L465.15 240.6 L470 235.3" fill="none" stroke="#232629" stroke-width="1.05"/></svg>
<svg style="position:absolute;left:0px;top:0px;" width="1" height="1" viewBox="0 0 1 1"><path d="M406.2 269.2 L411.1 274.4 L416 269.2" fill="none" stroke="#232629" stroke-width="1.05"/></svg>
<svg style="position:absolute;left:0px;top:0px;" width="1" height="1" viewBox="0 0 1 1"><path d="M460.3 269.2 L465.15 274.4 L470 269.2" fill="none" stroke="#232629" stroke-width="1.05"/></svg>
<svg style="position:absolute;left:0px;top:0px;" width="1" height="1" viewBox="0 0 1 1"><path d="M460.3 369.3 L465.15 374.6 L470 369.3" fill="none" stroke="#232629" stroke-width="1.05"/></svg>
</body></html>
